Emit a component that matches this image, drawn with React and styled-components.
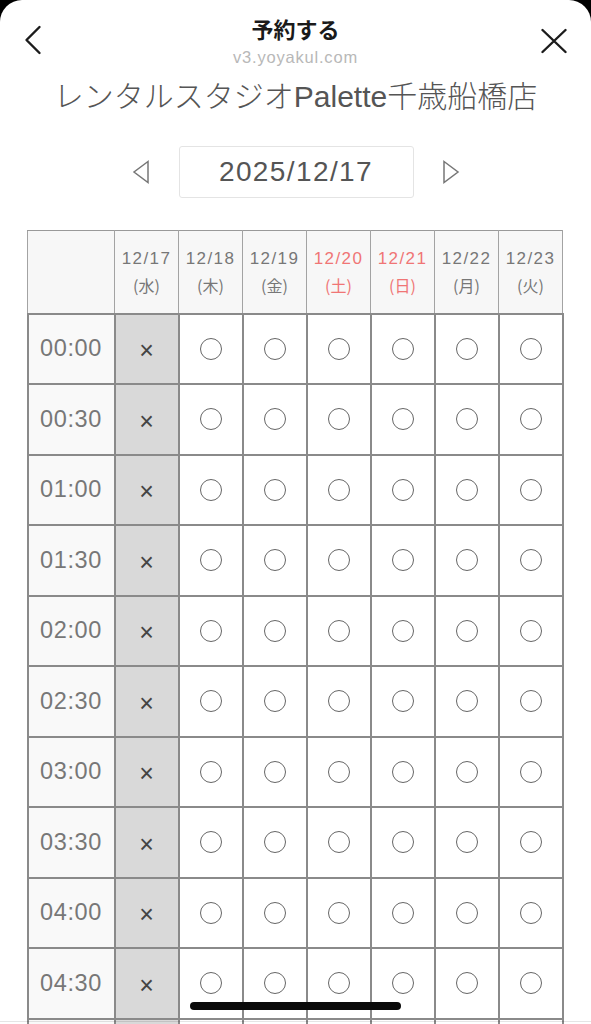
import React from "react";
import styled, { createGlobalStyle } from "styled-components";

const Global = createGlobalStyle`
  html, body { margin: 0; padding: 0; background: #000; }
  body { overflow: hidden; height: 1024px; font-family: "Liberation Sans", "Noto Sans CJK JP", sans-serif; }
  * { box-sizing: border-box; }
`;

const Sheet = styled.div`
  background: #fff;
  border-radius: 22px 22px 0 0;
  min-height: 1024px;
  display: flex;
  flex-direction: column;
  align-items: center;
  overflow: hidden;
`;

const TopBar = styled.header`
  width: 100%;
  display: flex;
  justify-content: space-between;
  align-items: flex-start;
  padding: 16px 24px 0 24px;
`;

const IconButton = styled.button`
  width: 26px;
  height: 30px;
  margin-top: ${(p) => p.$top}px;
  padding: 0;
  border: 0;
  background: none;
  display: flex;
  align-items: center;
  justify-content: ${(p) => p.$align};
  color: #1c1c1c;
`;

const TitleBlock = styled.div`
  display: flex;
  flex-direction: column;
  align-items: center;
`;

const Title = styled.h1`
  margin: 0;
  font-family: "Noto Sans CJK JP", sans-serif;
  font-size: 22px;
  line-height: 24px;
  font-weight: 700;
  color: #1a1a1a;
`;

const Sub = styled.div`
  margin-top: 7px;
  font-size: 16.5px;
  line-height: 20px;
  color: #b8b8b8;
  letter-spacing: 0.8px;
`;

const Store = styled.h2`
  margin: 12px 0 0 0;
  font-family: "Liberation Sans", "Noto Sans CJK JP", sans-serif;
  font-size: 30px;
  line-height: 36px;
  font-weight: 300;
  color: #555;
`;

const DateNav = styled.div`
  margin-top: 31px;
  display: flex;
  align-items: center;
`;

const Arrow = styled.button`
  width: 18px;
  height: 24px;
  padding: 0;
  border: 0;
  background: none;
  display: flex;
  align-items: center;
  justify-content: center;
  margin: ${(p) => (p.$right ? "0 0 0 28px" : "0 29px 0 0")};
`;

const DateBox = styled.div`
  width: 235px;
  height: 52px;
  border: 1px solid #e4e4e4;
  border-radius: 3px;
  display: flex;
  align-items: center;
  justify-content: center;
  font-size: 28px;
  letter-spacing: 1.4px;
  color: #555;
`;

const Table = styled.table`
  margin-top: 32px;
  margin-left: -1px;
  width: 537px;
  table-layout: fixed;
  border-collapse: collapse;
`;

const HeadCell = styled.th`
  height: 83px;
  padding: 0;
  background: #f7f7f7;
  border: 1px solid #a3a3a3;
  border-top: 1.5px solid #999;
  border-bottom: 2px solid #8a8a8a;
  font-weight: 400;
  font-size: 17px;
  line-height: 26px;
  letter-spacing: 1.4px;
  color: ${(p) => (p.$holiday ? "#f07575" : "#777")};
  vertical-align: middle;
  text-align: center;
`;

const DayName = styled.div`
  font-family: "Noto Sans CJK JP", sans-serif;
  font-size: 16px;
  letter-spacing: 0;
`;

const TimeCell = styled.td`
  height: 70.5px;
  padding: 0;
  background: #f9f9f9;
  border: 2px solid #8a8a8a;
  text-align: center;
  vertical-align: middle;
  font-size: 23.5px;
  letter-spacing: 0.6px;
  color: #777;
`;

const SlotCell = styled.td`
  height: 70.5px;
  padding: 0;
  background: ${(p) => (p.$closed ? "#d9d9d9" : "#fff")};
  border: 2px solid #8a8a8a;
  text-align: center;
  vertical-align: middle;
`;

const Circle = styled.span`
  display: inline-block;
  width: 22px;
  height: 22px;
  border: 1.3px solid #666;
  border-radius: 50%;
  vertical-align: middle;
`;

const Cross = styled.span`
  font-size: 25px;
  line-height: 1;
  color: #444;
  position: relative;
  top: 2px;
`;

const BottomRule = styled.div`
  position: fixed;
  left: 0;
  right: 0;
  bottom: 2px;
  height: 1px;
  background: rgba(0, 0, 0, 0.1);
`;

const HomeIndicator = styled.div`
  position: fixed;
  left: 190px;
  bottom: 14px;
  width: 211px;
  height: 8px;
  border-radius: 4px;
  background: #0a0a0a;
`;

const days = [
  { d: "12/17", w: "水" },
  { d: "12/18", w: "木" },
  { d: "12/19", w: "金" },
  { d: "12/20", w: "土", h: true },
  { d: "12/21", w: "日", h: true },
  { d: "12/22", w: "月" },
  { d: "12/23", w: "火" },
];

const times = ["00:00", "00:30", "01:00", "01:30", "02:00", "02:30", "03:00", "03:30", "04:00", "04:30"];

const TriLeft = () => (
  <svg width="18" height="24" viewBox="0 0 18 24">
    <path d="M16 1.5 L2 12 L16 22.5 Z" fill="none" stroke="#777" strokeWidth="1.5" />
  </svg>
);
const TriRight = () => (
  <svg width="18" height="24" viewBox="0 0 18 24">
    <path d="M2 1.5 L16 12 L2 22.5 Z" fill="none" stroke="#777" strokeWidth="1.5" />
  </svg>
);

const Row = ({ time }) => (
  <tr>
    <TimeCell>{time}</TimeCell>
    {days.map((d, i) => (
      <SlotCell key={d.d} $closed={i === 0}>
        {time && (i === 0 ? <Cross>×</Cross> : <Circle />)}
      </SlotCell>
    ))}
  </tr>
);

export default function App() {
  return (
    <>
      <Global />
      <Sheet>
        <TopBar>
          <IconButton $top={9} $align="flex-start" aria-label="戻る">
            <svg width="18" height="30" viewBox="0 0 18 30">
              <path d="M15.5 2 L2.5 15 L15.5 28" fill="none" stroke="#1c1c1c" strokeWidth="2.4" strokeLinecap="round" strokeLinejoin="round" />
            </svg>
          </IconButton>
          <TitleBlock>
            <Title>予約する</Title>
            <Sub>v3.yoyakul.com</Sub>
          </TitleBlock>
          <IconButton $top={10} $align="flex-end" aria-label="閉じる">
            <svg width="26" height="26" viewBox="0 0 26 26">
              <path d="M1.5 2 L24.5 24 M24.5 2 L1.5 24" fill="none" stroke="#1c1c1c" strokeWidth="2.4" strokeLinecap="round" />
            </svg>
          </IconButton>
        </TopBar>
        <Store>レンタルスタジオPalette千歳船橋店</Store>
        <DateNav>
          <Arrow aria-label="前"><TriLeft /></Arrow>
          <DateBox>2025/12/17</DateBox>
          <Arrow $right aria-label="次"><TriRight /></Arrow>
        </DateNav>
        <Table>
          <colgroup>
            <col style={{ width: "87px" }} />
            {days.map((d) => (
              <col key={d.d} />
            ))}
          </colgroup>
          <thead>
            <tr>
              <HeadCell />
              {days.map((d) => (
                <HeadCell key={d.d} $holiday={d.h}>
                  <div>{d.d}</div>
                  <DayName>({d.w})</DayName>
                </HeadCell>
              ))}
            </tr>
          </thead>
          <tbody>
            {times.map((t) => (
              <Row key={t} time={t} />
            ))}
            <Row time="" />
          </tbody>
        </Table>
      </Sheet>
      <BottomRule />
      <HomeIndicator />
    </>
  );
}
